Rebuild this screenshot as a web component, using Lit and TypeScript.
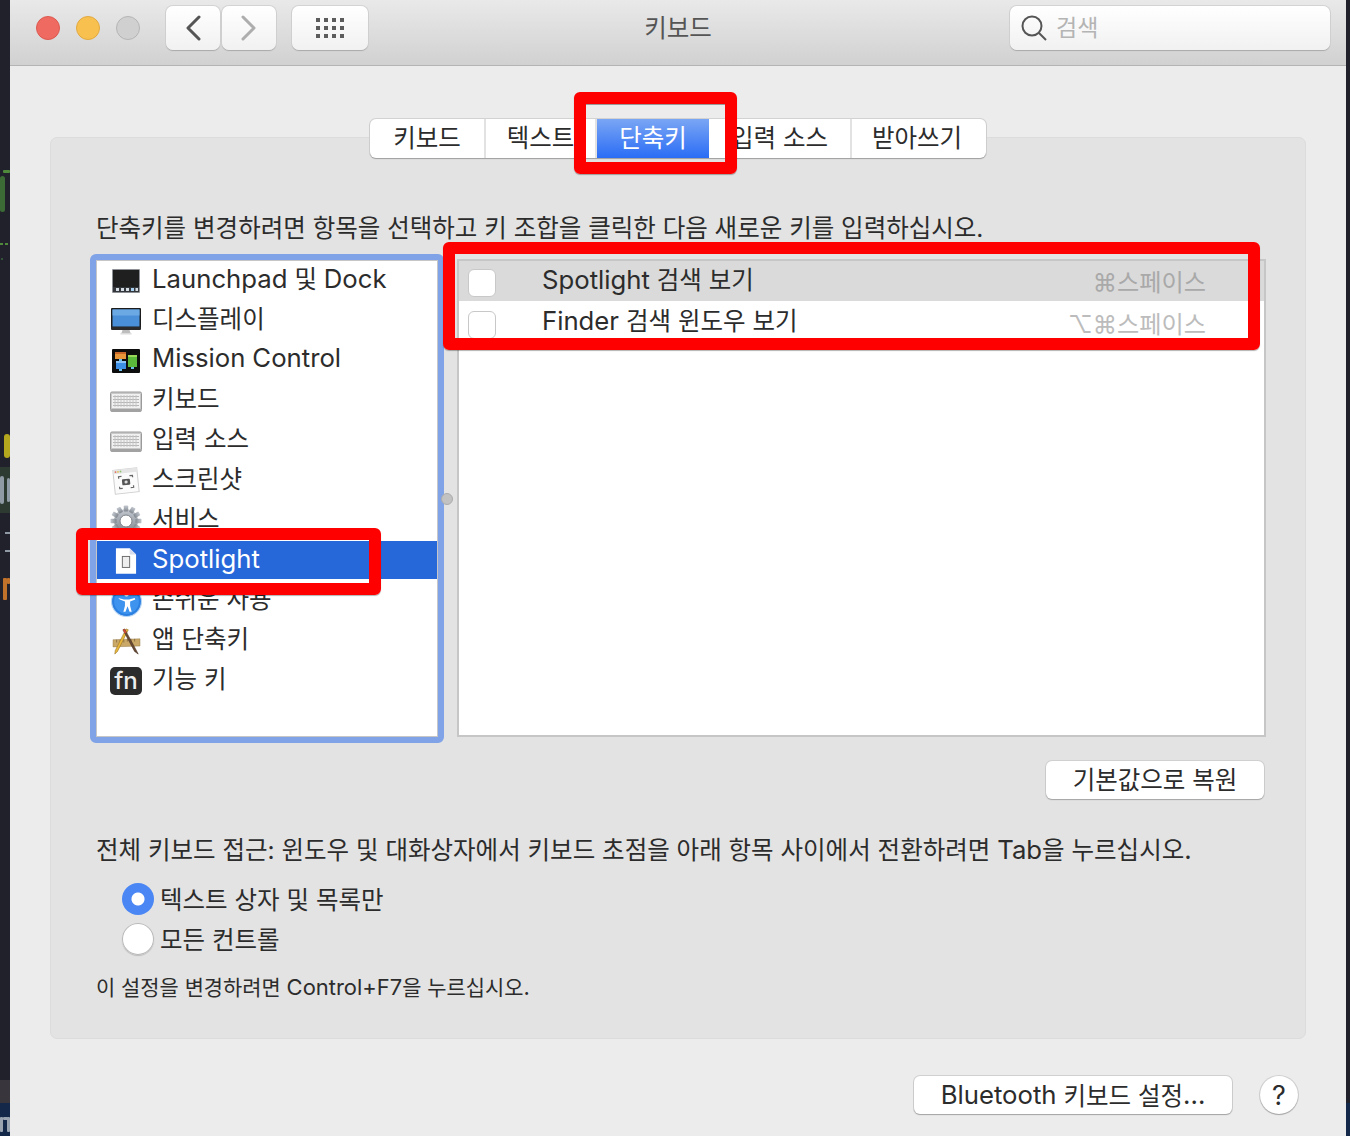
import { LitElement, html, css, svg } from "lit";
import { customElement } from "lit/decorators.js";

// latin runs are a bit larger than the hangul around them
const txt = (s: string) =>
  s.split(/([A-Za-z0-9+.?]+)/).map((part, i) => (i % 2 ? html`<span class="lat">${part}</span>` : part));

const keyboardIcon = html`<svg viewBox="0 0 32 24" width="32" height="24">
  <rect x="0.5" y="3" width="31" height="19" rx="1.5" fill="#c9c9c9" stroke="#9a9a9a" />
  <rect x="2" y="5" width="28" height="14" fill="#f1f1f1" />
  <path d="M3 7.5h26M3 10.5h26M3 13.5h26M3 16.5h26" stroke="#b5b5b5" stroke-width="1" />
  <path d="M5 6v12M8 6v12M11 6v12M14 6v12M17 6v12M20 6v12M23 6v12M26 6v12" stroke="#c6c6c6" stroke-width="1" />
  <rect x="0.5" y="20" width="31" height="3" rx="1.5" fill="#a2a2a2" />
</svg>`;

const icons = {
  launchpad: html`<svg viewBox="0 0 30 28" width="30" height="28">
    <rect x="1" y="2" width="28" height="24" rx="1" fill="#8d9196" />
    <rect x="2" y="3" width="26" height="17" fill="#1f1f1f" />
    <rect x="2" y="20" width="26" height="5" fill="#33363a" />
    <g fill="#d5dbe2"><rect x="5" y="21" width="3" height="3" /><rect x="10" y="21" width="3" height="3" /><rect x="15" y="21" width="3" height="3" /><rect x="20" y="21" width="3" height="3" fill="#a8d0f0" /><rect x="24.5" y="21" width="2.5" height="3" /></g>
  </svg>`,
  display: html`<svg viewBox="0 0 32 30" width="32" height="30">
    <rect x="1" y="2" width="30" height="20" rx="1" fill="#1c1c1c" />
    <rect x="2.5" y="3.5" width="27" height="17" fill="#4a90d9" />
    <path d="M2.5 3.5h27v6h-27z" fill="#6aa9e3" />
    <path d="M1 21h30v2a1 1 0 0 1-1 1H2a1 1 0 0 1-1-1z" fill="#2a2a2a" />
    <path d="M12.5 24h7l1 3h-9z" fill="#bdbdbd" /><rect x="10.5" y="27" width="11" height="1.5" fill="#dcdcdc" />
  </svg>`,
  mission: html`<svg viewBox="0 0 28 26" width="28" height="26">
    <rect x="0" y="1" width="28" height="24" rx="1" fill="#0d0d0d" />
    <rect x="3" y="4" width="11" height="7" fill="#e8963a" /><rect x="3" y="4" width="11" height="2" fill="#c8662a" />
    <rect x="16" y="7" width="9" height="12" fill="#5cb83a" /><rect x="16" y="7" width="9" height="2" fill="#9ad85a" />
    <rect x="4" y="13" width="10" height="8" fill="#3d8fe6" /><rect x="4" y="13" width="10" height="2" fill="#8ec4f5" />
    <rect x="7" y="21" width="3" height="2" fill="#6cc0ee" /><rect x="7" y="11" width="3" height="2" fill="#6cc0ee" />
    <rect x="19" y="19" width="3" height="2" fill="#6cc0ee" />
  </svg>`,
  keyboard: keyboardIcon,
  screenshot: html`<svg viewBox="0 0 30 30" width="30" height="30">
    <g transform="rotate(-6 15 15)">
      <rect x="3" y="3" width="24" height="24" fill="#fbfbfb" stroke="#cfcfcf" />
      <rect x="3" y="3" width="24" height="4" fill="#e5e5e5" />
      <circle cx="5.5" cy="5" r="0.9" fill="#e0705f" /><circle cx="8" cy="5" r="0.9" fill="#e6bc55" /><circle cx="10.5" cy="5" r="0.9" fill="#8cc46c" />
      <path d="M8 12v-2h3M19 10h3v2M22 20v2h-3M11 22H8v-2" fill="none" stroke="#666" stroke-width="1.2" />
      <rect x="11" y="13" width="8" height="6" rx="1" fill="#555" /><circle cx="15" cy="16" r="1.6" fill="#ddd" />
    </g>
  </svg>`,
  gear: html`<svg viewBox="0 0 32 32" width="32" height="32">
    <defs><linearGradient id="gr" x1="0" y1="0" x2="0" y2="1"><stop offset="0" stop-color="#c4c9d0" /><stop offset="1" stop-color="#828890" /></linearGradient></defs>
    <g fill="url(#gr)">
      <circle cx="16" cy="16" r="12" />
      ${[0, 30, 60, 90, 120, 150, 180, 210, 240, 270, 300, 330].map(
        (a) => svg`<rect x="13.8" y="0.5" width="4.4" height="6" rx="0.8" transform="rotate(${a} 16 16)" />`
      )}
    </g>
    <circle cx="16" cy="16" r="6" fill="#fff" stroke="#7d838b" />
  </svg>`,
  spotlight: html`<svg viewBox="0 0 24 30" width="22" height="30">
    <path d="M1 1h15l7 7v21H1z" fill="#fff" /><path d="M16 1l7 7h-7z" fill="#d6dcec" />
    <rect x="8" y="10" width="8" height="12" fill="#eee" stroke="#666" />
  </svg>`,
  access: html`<svg viewBox="0 0 30 30" width="31" height="31">
    <circle cx="15" cy="15" r="14.5" fill="#2b7fe0" stroke="#b8d6f5" stroke-width="1" />
    <circle cx="15" cy="15" r="12" fill="#3d93ee" />
    <circle cx="15" cy="8" r="2.2" fill="#fff" />
    <path d="M7 11.5l5.5 1.5h5l5.5-1.5.5 1.5-5 2v4l1.5 6h-2l-2-5.5-2 5.5h-2l1.5-6v-4l-5-2z" fill="#fff" />
  </svg>`,
  apps: html`<svg viewBox="0 0 32 30" width="29" height="27">
    <path d="M1 13l30-1v8l-30 1z" fill="#c9a868" stroke="#94784a" stroke-width="0.5" />
    <path d="M5 13v3M9 13v3M13 13v3M17 12v3M21 12v3M25 12v3" stroke="#7a6238" stroke-width="0.8" />
    <path d="M18 2l-12 24 -3 3 .5-4 12-24z" fill="#e9b83c" stroke="#8f6a20" stroke-width="0.6" />
    <path d="M14 1l13 24 2 4-4-3-13-24z" fill="#6b4a34" stroke="#3e2a1c" stroke-width="0.6" />
    <path d="M14 1l2 4-2 1-2-4z" fill="#d04a3a" />
  </svg>`,
};

type Item = { icon?: keyof typeof icons; label: string; selected?: boolean; fn?: boolean };

const items: Item[] = [
  { icon: "launchpad", label: "Launchpad 및 Dock" },
  { icon: "display", label: "디스플레이" },
  { icon: "mission", label: "Mission Control" },
  { icon: "keyboard", label: "키보드" },
  { icon: "keyboard", label: "입력 소스" },
  { icon: "screenshot", label: "스크린샷" },
  { icon: "gear", label: "서비스" },
  { icon: "spotlight", label: "Spotlight", selected: true },
  { icon: "access", label: "손쉬운 사용" },
  { icon: "apps", label: "앱 단축키" },
  { fn: true, label: "기능 키" },
];

const tabs = [
  { label: "키보드", width: 116 },
  { label: "텍스트", width: 111 },
  { label: "단축키", width: 112, active: true },
  { label: "입력 소스", width: 143 },
  { label: "받아쓰기", width: 134 },
];

// blurred editor text showing behind the window: [top, left, width, height, colour, radius]
const codeBits: [number, number, number, number, string, number][] = [
  [170, 3, 7, 3, "#4f8a3c", 1],
  [176, 0, 5, 36, "#3d6b35", 3],
  [243, 0, 3, 2, "#4f8a3c", 0],
  [243, 5, 3, 2, "#4f8a3c", 0],
  [258, 1, 2, 2, "#35523a", 0],
  [467, 0, 10, 46, "#2c3a31", 0],
  [434, 4, 6, 24, "#b5a81e", 8],
  [476, 0, 4, 28, "#8f9aa5", 2],
  [478, 7, 3, 24, "#8f9aa5", 2],
  [532, 5, 5, 2, "#8f9aa5", 0],
  [550, 5, 5, 2, "#8f9aa5", 0],
  [578, 3, 4, 22, "#c0722a", 1],
  [578, 7, 3, 6, "#c0722a", 1],
  [1080, 0, 10, 23, "#38353d", 0],
  [1103, 0, 10, 33, "#14294a", 0],
  [1117, 0, 3, 15, "#9aa4b0", 1],
  [1117, 3, 5, 3, "#9aa4b0", 1],
  [1117, 7, 3, 15, "#9aa4b0", 1],
];

@customElement("app-root")
export class AppRoot extends LitElement {
  static styles = css`
    :host {
      display: block;
      position: relative;
      width: 1350px;
      height: 1136px;
      overflow: hidden;
      font-family: Inter, "Noto Sans CJK KR", sans-serif;
      font-size: 24.5px;
      color: #2c2c2c;
      background: #20212b;
    }
    .lat { font-size: 1.05em; }
    .screen {
      display: flex;
      height: 100%;
    }
    .code {
      position: relative;
      width: 10px;
      flex: none;
      overflow: hidden;
      background: #20212b;
    }
    .code i {
      position: absolute;
      display: block;
      filter: blur(0.5px);
    }
    .edge {
      width: 4px;
      flex: none;
      background: linear-gradient(#20212b 1103px, #14294a 1103px);
    }
    .window {
      flex: 1;
      display: flex;
      flex-direction: column;
      background: #ececec;
    }
    .toolbar {
      flex: none;
      display: flex;
      align-items: flex-start;
      height: 59px;
      padding: 6px 16px 0 26px;
      background: linear-gradient(#e9e9e9, #d1d1d1);
      border-bottom: 1px solid #b4b4b4;
    }
    .lights {
      display: flex;
      gap: 16px;
      padding: 10px 0 0 0;
      width: 130px;
    }
    .light {
      width: 24px;
      height: 24px;
      border-radius: 50%;
      box-sizing: border-box;
    }
    .red { background: #ef6a60; border: 1px solid #dc5a50; }
    .yellow { background: #f8c14f; border: 1px solid #e2a93f; }
    .gray { background: #d0d0d0; border: 1px solid #b5b5b5; }
    .tool {
      height: 44px;
      background: linear-gradient(#ffffff, #f1f1f1);
      border-radius: 7px;
      box-shadow: 0 1px 1px #a9a9a9, 0 0 0 1px #d3d3d3;
      display: flex;
      align-items: center;
      justify-content: center;
      box-sizing: border-box;
    }
    .nav { width: 54px; margin-right: 2px; }
    .grid-btn { width: 76px; margin-left: 14px; }
    .title {
      flex: 1;
      text-align: center;
      line-height: 44px;
      color: #555;
      padding-right: 22px;
    }
    .search {
      width: 320px;
      justify-content: flex-start;
      padding-left: 10px;
      gap: 8px;
      font-size: 23px;
      color: #b4b4b4;
    }
    .search span { padding-bottom: 4px; }
    .content {
      flex: 1;
      display: flex;
      flex-direction: column;
      padding: 71px 40px 0;
    }
    .panel {
      height: 902px;
      box-sizing: border-box;
      background: #e3e3e3;
      border: 1px solid #dcdcdc;
      border-radius: 7px;
      padding: 0 39px;
      display: flex;
      flex-direction: column;
    }
    .tabs {
      align-self: center;
      display: flex;
      height: 39px;
      margin-top: -19px;
      background: #fff;
      border-radius: 6px;
      box-shadow: 0 1px 1px #9f9f9f, 0 0 0 1px #d2d2d2;
    }
    .tab {
      display: flex;
      align-items: center;
      justify-content: center;
      box-sizing: border-box;
      padding-bottom: 4px;
      border-right: 2px solid #e2e2e2;
    }
    .tab:last-child { border-right: 0; padding-right: 4px; }
    .tab.active {
      color: #fff;
      border-right: 0;
      background: linear-gradient(#7aa6f4, #2a6cf5);
    }
    .instruction {
      margin: 50px 0 0 6px;
      line-height: 40px;
      height: 40px;
    }
    .lists {
      display: flex;
      margin-top: 6px;
      height: 489px;
    }
    .sidebar {
      width: 354px;
      flex: none;
      box-sizing: border-box;
      border: 6px solid #7fa3e6;
      border-radius: 6px;
      background: #fff;
      box-shadow: inset 0 0 0 1px #c6c6c6;
      padding: 0 1px 1px;
    }
    .row {
      height: 40px;
      display: flex;
      align-items: center;
      padding-left: 13px;
    }
    .row.selected {
      background: #2667da;
      color: #fff;
      height: 38px;
      margin: 1px 0;
    }
    .row-label { padding-bottom: 6px; }
    .row.selected .row-label { padding-bottom: 4px; }
    .row-icon {
      width: 32px;
      height: 32px;
      flex: none;
      margin-right: 10px;
      display: flex;
      align-items: center;
      justify-content: center;
      position: relative;
      top: 1px;
    }
    .fn {
      width: 32px;
      height: 28px;
      border-radius: 5px;
      background: #2c2c2c;
      color: #eee;
      font-size: 24px;
      line-height: 27px;
      text-align: center;
      font-weight: 500;
    }
    .splitter {
      width: 13px;
      flex: none;
      display: flex;
      align-items: center;
    }
    .splitter span {
      width: 12px;
      height: 12px;
      margin-left: -3px;
      border-radius: 50%;
      background: #c2c2c2;
      border: 1px solid #acacac;
      box-sizing: border-box;
    }
    .table {
      flex: 1;
      margin: 5px 0 6px;
      background: #fff;
      border: 2px solid #c6c6c6;
    }
    .shortcut {
      height: 40px;
      display: flex;
      align-items: center;
      padding: 0 58px 0 9px;
    }
    .shortcut.on { background: #dadada; }
    .shortcut.off { height: 42px; }
    .check {
      width: 28px;
      height: 28px;
      flex: none;
      box-sizing: border-box;
      background: #fff;
      border: 1px solid #c8c8c8;
      border-radius: 6px;
      margin: 4px 46px 0 0;
    }
    .shortcut.off .check { margin-top: 6px; }
    .shortcut .name { flex: 1; padding-bottom: 6px; }
    .shortcut.off .name { padding-bottom: 5px; }
    .shortcut .keys { font-size: 24.2px; color: #bcbcbc; padding-bottom: 0; }
    .shortcut.on .keys { color: #a9a9a9; padding-bottom: 1px; }
    .restore-row {
      display: flex;
      justify-content: flex-end;
      margin-top: 18px;
      padding-right: 2px;
    }
    .btn {
      height: 38px;
      box-sizing: border-box;
      background: #fff;
      border-radius: 6px;
      box-shadow: 0 1px 1px #a5a5a5, 0 0 0 1px #d0d0d0;
      display: flex;
      align-items: center;
      justify-content: center;
      padding-bottom: 4px;
      white-space: pre;
    }
    .restore { width: 218px; }
    .kb-text {
      margin: 31px 0 0 6px;
      line-height: 40px;
    }
    .radios {
      margin: 9px 0 0 32px;
    }
    .radio-row {
      height: 40px;
      display: flex;
      align-items: center;
      gap: 6px;
    }
    .radio-row .label { padding-bottom: 2px; }
    .radio {
      width: 32px;
      height: 32px;
      border-radius: 50%;
      box-sizing: border-box;
      background: #fff;
      box-shadow: inset 0 0 0 1px #b9b9b9, 0 1px 1px #bbb;
    }
    .radio.on {
      background: radial-gradient(circle, #fff 0 6px, #4a87f5 7px);
      box-shadow: none;
    }
    .note {
      margin: 8px 0 0 6px;
      font-size: 20.9px;
      line-height: 40px;
    }
    .footer {
      display: flex;
      align-items: center;
      justify-content: flex-end;
      gap: 28px;
      margin-top: 37px;
      padding-right: 8px;
      height: 38px;
    }
    .bluetooth { width: 318px; padding-bottom: 2px; }
    .help {
      width: 38px;
      height: 38px;
      border-radius: 50%;
      box-sizing: border-box;
      background: #fff;
      box-shadow: 0 1px 1px #a5a5a5, 0 0 0 1px #d0d0d0;
      display: flex;
      align-items: center;
      justify-content: center;
      font-size: 27px;
    }
    .mark {
      position: absolute;
      box-sizing: border-box;
      border: 12px solid #ff0000;
      border-radius: 6px;
      box-shadow: 0 1px 1px rgba(0, 0, 0, 0.3);
      pointer-events: none;
    }
    .mark.tab-mark { left: 574px; top: 92px; width: 163px; height: 82px; }
    .mark.table-mark { left: 443px; top: 242px; width: 817px; height: 108px; }
    .mark.spot-mark { left: 76px; top: 528px; width: 305px; height: 67px; }
    .tab-line {
      position: absolute;
      left: 586px;
      top: 104px;
      width: 139px;
      height: 1px;
      background: #9a9a9a;
    }
  `;

  render() {
    return html`
      <div class="screen">
        <div class="code">
          ${codeBits.map(
            ([top, left, w, h, color, r]) =>
              html`<i style="top:${top}px;left:${left}px;width:${w}px;height:${h}px;background:${color};border-radius:${r}px"></i>`
          )}
        </div>
        <div class="window">
          <div class="toolbar">
            <div class="lights">
              <span class="light red"></span><span class="light yellow"></span><span class="light gray"></span>
            </div>
            <div class="tool nav">
              <svg width="16" height="26" viewBox="0 0 16 26"><path d="M14 2L3 13l11 11" fill="none" stroke="#555" stroke-width="3" stroke-linecap="round" stroke-linejoin="round" /></svg>
            </div>
            <div class="tool nav">
              <svg width="16" height="26" viewBox="0 0 16 26"><path d="M2 2l11 11L2 24" fill="none" stroke="#adadad" stroke-width="3" stroke-linecap="round" stroke-linejoin="round" /></svg>
            </div>
            <div class="tool grid-btn">
              <svg width="28" height="20" viewBox="0 0 28 20" fill="#5c5c5c">
                ${[0, 8, 16].map((y) =>
                  [0, 8, 16, 24].map((x) => svg`<rect x=${x} y=${y} width="4" height="4" />`)
                )}
              </svg>
            </div>
            <div class="title">키보드</div>
            <div class="tool search">
              <svg width="28" height="30" viewBox="0 0 28 30"><circle cx="12" cy="13" r="9.5" fill="none" stroke="#555" stroke-width="2" /><path d="M19 20l7 7" stroke="#555" stroke-width="2" /></svg>
              <span>검색</span>
            </div>
          </div>
          <div class="content">
            <div class="panel">
              <div class="tabs">
                ${tabs.map(
                  (t) => html`<div class="tab ${t.active ? "active" : ""}" style="width:${t.width}px">${t.label}</div>`
                )}
              </div>
              <div class="instruction">단축키를 변경하려면 항목을 선택하고 키 조합을 클릭한 다음 새로운 키를 입력하십시오.</div>
              <div class="lists">
                <div class="sidebar">
                  ${items.map(
                    (it) => html`<div class="row ${it.selected ? "selected" : ""}">
                      <span class="row-icon">${it.fn ? html`<span class="fn">fn</span>` : icons[it.icon!]}</span>
                      <span class="row-label">${txt(it.label)}</span>
                    </div>`
                  )}
                </div>
                <div class="splitter"><span></span></div>
                <div class="table">
                  <div class="shortcut on">
                    <span class="check"></span><span class="name">${txt("Spotlight 검색 보기")}</span><span class="keys">⌘스페이스</span>
                  </div>
                  <div class="shortcut off">
                    <span class="check"></span><span class="name">${txt("Finder 검색 윈도우 보기")}</span><span class="keys">⌥⌘스페이스</span>
                  </div>
                </div>
              </div>
              <div class="restore-row"><div class="btn restore">기본값으로 복원</div></div>
              <div class="kb-text">${txt("전체 키보드 접근: 윈도우 및 대화상자에서 키보드 초점을 아래 항목 사이에서 전환하려면 Tab을 누르십시오.")}</div>
              <div class="radios">
                <div class="radio-row"><span class="radio on"></span><span class="label">텍스트 상자 및 목록만</span></div>
                <div class="radio-row"><span class="radio"></span><span class="label">모든 컨트롤</span></div>
              </div>
              <div class="note">${txt("이 설정을 변경하려면 Control+F7을 누르십시오.")}</div>
            </div>
            <div class="footer">
              <div class="btn bluetooth">${txt("Bluetooth 키보드 설정...")}</div>
              <div class="help">?</div>
            </div>
          </div>
        </div>
        <div class="edge"></div>
      </div>
      <div class="tab-line"></div>
      <div class="mark tab-mark"></div>
      <div class="mark table-mark"></div>
      <div class="mark spot-mark"></div>
    `;
  }
}
